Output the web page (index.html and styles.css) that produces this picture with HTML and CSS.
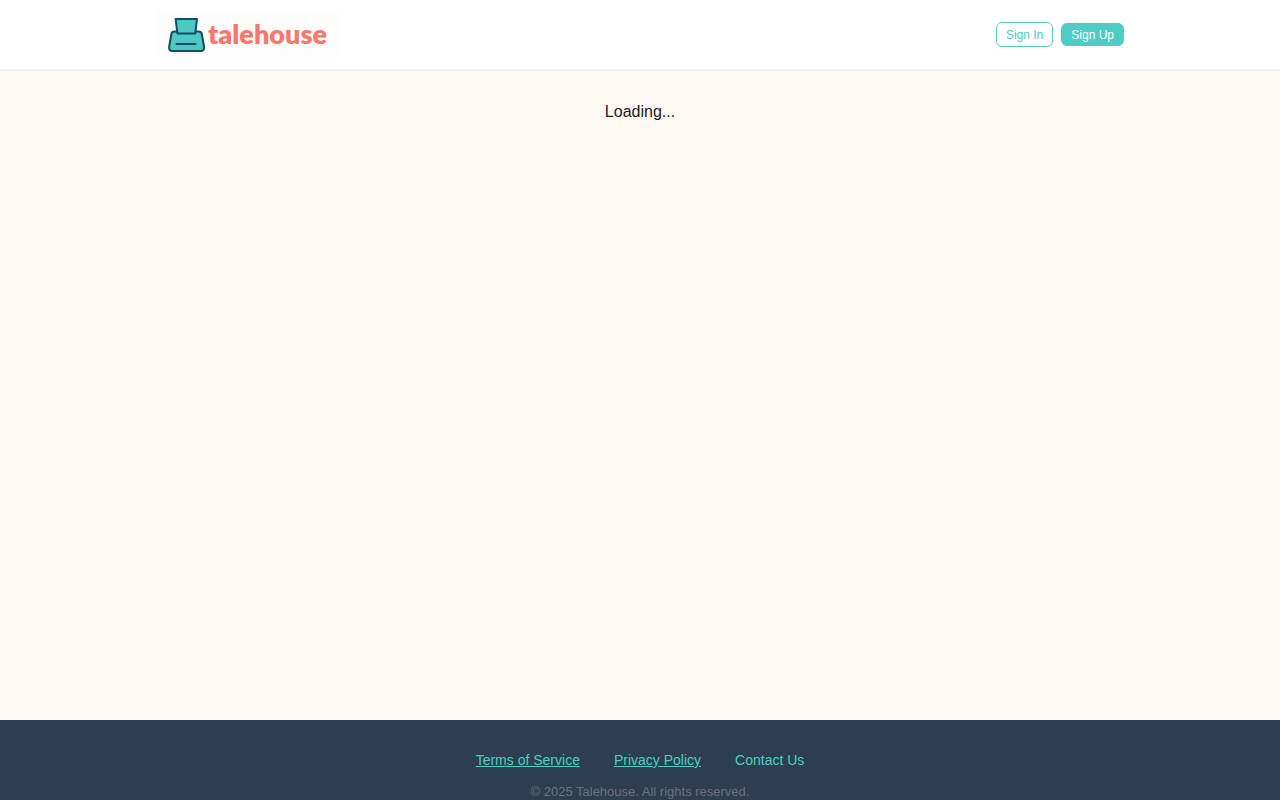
FILE: index.html
```html
<!DOCTYPE html>
<html lang="en">
<head>
<meta charset="utf-8">
<title>Talehouse</title>
<link rel="stylesheet" href="styles.css">
</head>
<body>
<header class="header">
  <div class="header-inner">
    <a class="logo" href="#" aria-label="Talehouse home">
      <svg class="logo-icon" viewBox="0 0 38 36" aria-hidden="true">
        <path d="M8 14.500h-1.500q-2.600 0-3.100 2.500l-2.200 12.500q-.7 4.400 3.300 4.400h28.200q4 0 3.300-4.400l-2.200-12.500q-.5-2.500-3.100-2.500h-1.500z"/>
        <path d="M7.600 2h21.400l-1.700 14.400h-17.900z"/>
        <path d="M8.500 27h19"/>
      </svg>
      <span class="logo-text">talehouse</span>
    </a>
    <nav class="actions">
      <button class="button button-outline" type="button">Sign In</button>
      <button class="button button-solid" type="button">Sign Up</button>
    </nav>
  </div>
</header>
<main class="main">Loading...</main>
<footer class="footer">
  <nav class="footer-links">
    <a class="footer-link" href="#">Terms of Service</a>
    <a class="footer-link" href="#">Privacy Policy</a>
    <a class="footer-link footer-link-plain" href="#">Contact Us</a>
  </nav>
  <p class="copyright">© 2025 Talehouse. All rights reserved.</p>
</footer>
</body>
</html>
```
FILE: styles.css
```css
* {
  box-sizing: border-box;
}

body {
  display: flex;
  flex-direction: column;
  min-height: 100vh;
  margin: 0;
  background: #fff8f3;
  color: #1a1a1a;
  font-family: "Liberation Sans", Arial, sans-serif;
  font-size: 16px;
  line-height: 18px;
}

.header {
  background: #fff;
  border-bottom: 2px solid #edf0f4;
}

.header-inner {
  display: flex;
  align-items: center;
  justify-content: space-between;
  max-width: 1000px;
  margin: 0 auto;
  padding: 12px 16px;
}

.logo {
  display: flex;
  align-items: center;
  gap: 2px;
  height: 45px;
  padding: 0 12px;
  background: #fefdfb;
  text-decoration: none;
}

.logo-icon {
  width: 38px;
  height: 36px;
  flex: none;
  fill: #4ec8c3;
  stroke: #124f60;
  stroke-width: 2;
  stroke-linejoin: round;
  stroke-linecap: round;
}

.logo-text {
  padding-bottom: 2px;
  color: #fd766b;
  font-family: Lato, sans-serif;
  font-size: 27px;
  font-weight: 800;
  line-height: 32px;
}

.actions {
  display: flex;
  align-items: center;
  gap: 8px;
}

.button {
  padding: 5px 9px 3px;
  border: 1px solid #4ecdc4;
  border-radius: 6px;
  font-family: inherit;
  font-size: 12px;
  line-height: 15px;
  cursor: pointer;
}

.button-outline {
  background: #fff;
  color: #4ecdc4;
}

.button-solid {
  padding: 4px 9px 2px;
  background: #4ecdc4;
  color: #fff;
}

.main {
  flex: 1;
  padding: 32px 16px;
  text-align: center;
}

.footer {
  padding: 32px 16px 0;
  background: #2d3e50;
  text-align: center;
}

.footer-links {
  display: flex;
  justify-content: center;
  gap: 34px;
  margin-bottom: 15px;
  font-size: 14px;
  line-height: 17px;
}

.footer-link {
  color: #4ecdc4;
  text-decoration: underline;
}

.footer-link-plain {
  text-decoration: none;
}

.copyright {
  margin: 0;
  color: #6b7280;
  font-size: 13px;
  line-height: 16px;
}
```
